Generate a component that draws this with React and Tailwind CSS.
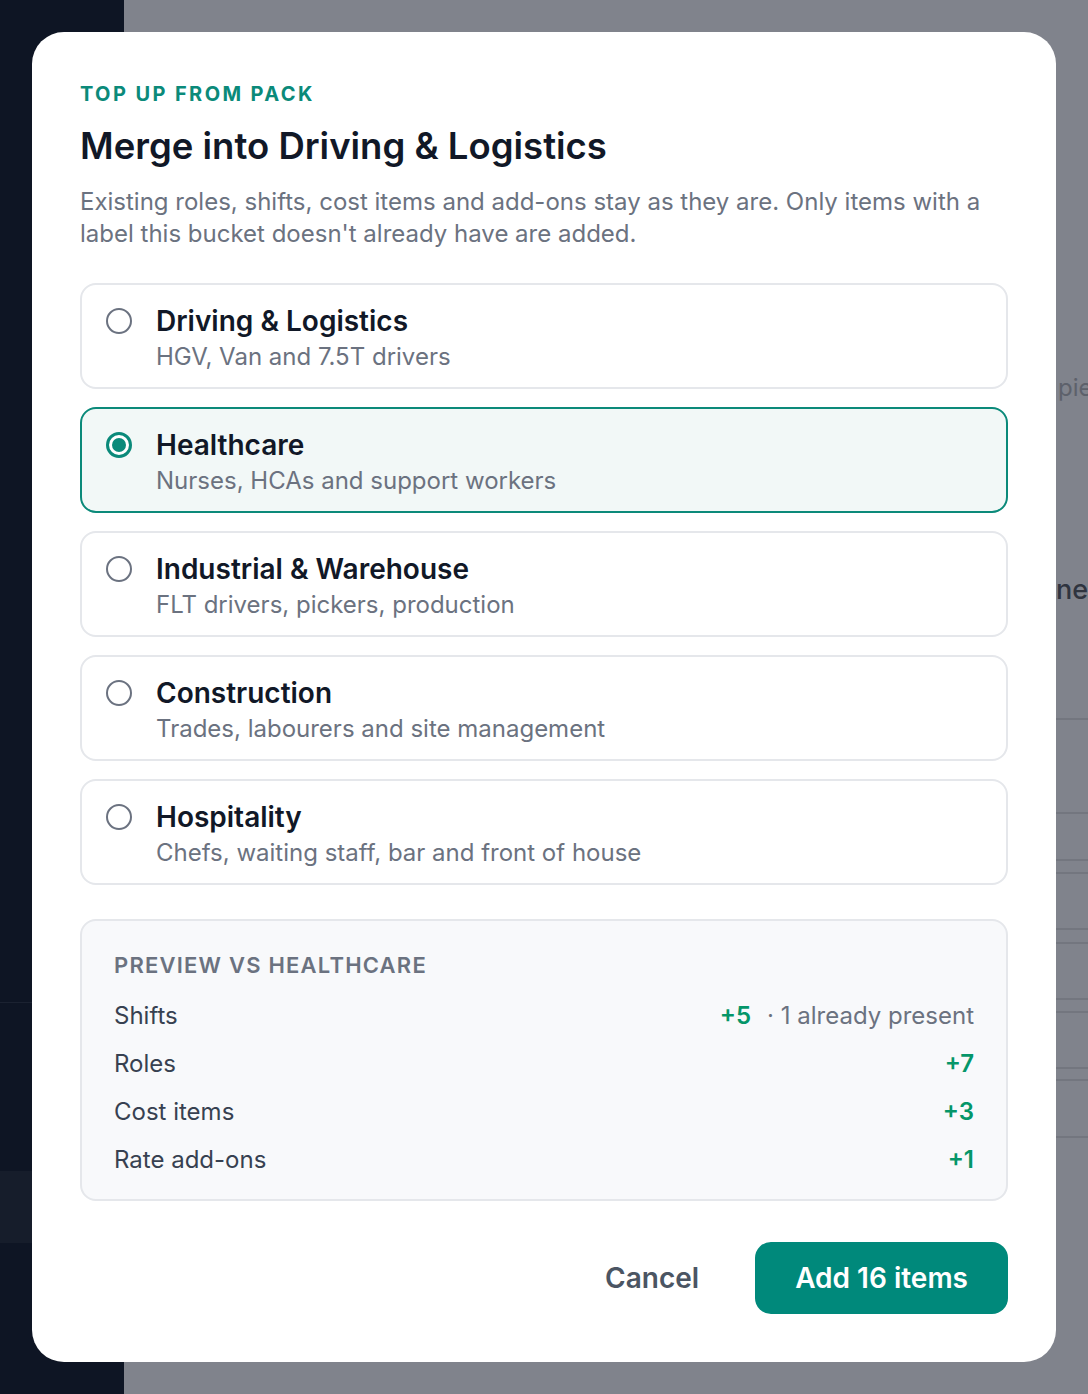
import { useState } from 'react'

const packs = [
  { id: 'driving', name: 'Driving & Logistics', blurb: 'HGV, Van and 7.5T drivers' },
  { id: 'healthcare', name: 'Healthcare', blurb: 'Nurses, HCAs and support workers' },
  { id: 'industrial', name: 'Industrial & Warehouse', blurb: 'FLT drivers, pickers, production' },
  { id: 'construction', name: 'Construction', blurb: 'Trades, labourers and site management' },
  { id: 'hospitality', name: 'Hospitality', blurb: 'Chefs, waiting staff, bar and front of house' },
]

const preview = [
  { label: 'Shifts', added: 5, present: 1 },
  { label: 'Roles', added: 7 },
  { label: 'Cost items', added: 3 },
  { label: 'Rate add-ons', added: 1 },
]

function Radio({ checked }) {
  if (checked) {
    return (
      <span className="w-[26px] h-[26px] shrink-0 rounded-full border-[3px] border-[#0b8a7a] bg-white flex items-center justify-center">
        <span className="w-[14px] h-[14px] rounded-full bg-[#0b8a7a]" />
      </span>
    )
  }
  return <span className="w-[26px] h-[26px] shrink-0 rounded-full border-2 border-[#6b7280] bg-white" />
}

function Backdrop() {
  // the page behind the dimmed overlay
  return (
    <div className="absolute inset-0 flex">
      <aside className="w-[124px] shrink-0 bg-[#0e1524] flex flex-col">
        <div className="h-[1003px] border-b border-[#1b2231]" />
        <div className="h-[168px]" />
        <div className="h-[72px] bg-[#161d2b]" />
      </aside>
      <div className="flex-1 bg-[#80838c] flex flex-col pl-[932px]">
        <div className="h-[372px] shrink-0" />
        <p className="pl-[2px] text-[24px] leading-[32px] text-[#5d616b] whitespace-nowrap">pieces</p>
        <div className="h-[166px] shrink-0" />
        <p className="text-[27px] leading-[40px] font-medium text-[#2f343f] whitespace-nowrap">new</p>
        <div className="h-[110px] shrink-0 border-b-2 border-[#73767f]" />
        <div className="h-[94px] shrink-0 border-b-2 border-[#73767f]" />
        <div className="h-[47px] shrink-0 border-b-2 border-[#73767f]" />
        <div className="h-[13px] shrink-0 border-b-2 border-[#73767f]" />
        <div className="h-[56px] shrink-0 border-b-2 border-[#73767f]" />
        <div className="h-[14px] shrink-0 border-b-2 border-[#73767f]" />
        <div className="h-[56px] shrink-0 border-b-2 border-[#73767f]" />
        <div className="h-[13px] shrink-0 border-b-2 border-[#73767f]" />
        <div className="h-[56px] shrink-0 border-b-2 border-[#73767f]" />
        <div className="h-[12px] shrink-0 border-b-2 border-[#73767f]" />
        <div className="h-[57px] shrink-0 border-b-2 border-[#73767f]" />
      </div>
    </div>
  )
}

export default function App() {
  const [selected, setSelected] = useState('healthcare')
  const total = preview.reduce((sum, row) => sum + row.added, 0)
  const current = packs.find((p) => p.id === selected)

  return (
    <div className="relative w-full h-[1394px] overflow-hidden font-['Inter',sans-serif]">
      <Backdrop />

      <div className="absolute left-[32px] top-[32px] w-[1024px] bg-white rounded-[32px] px-[48px] pt-[48px] pb-[48px]">
        <p className="text-[20px] leading-[28px] font-bold tracking-[0.12em] text-[#0b8a7a]">TOP UP FROM PACK</p>
        <h2 className="mt-4 text-[36.5px] leading-[44px] font-semibold text-[#111827]">
          Merge into Driving &amp; Logistics
        </h2>
        <p className="mt-[18px] text-[24px] leading-[32px] text-[#6b7280]">
          Existing roles, shifts, cost items and add-ons stay as they are. Only items with a label this bucket doesn't
          already have are added.
        </p>

        <div className="mt-[33px] flex flex-col gap-[18px]">
          {packs.map((pack) => {
            const isOn = pack.id === selected
            return (
              <button
                key={pack.id}
                onClick={() => setSelected(pack.id)}
                className={`w-full text-left rounded-[16px] border-2 px-[24px] pt-[18px] pb-[14px] flex gap-[24px] ${
                  isOn ? 'border-[#0b8a7a] bg-[#f2f8f7]' : 'border-[#e5e7eb] bg-white'
                }`}
              >
                <span className="h-[36px] flex items-center">
                  <Radio checked={isOn} />
                </span>
                <span className="flex flex-col">
                  <span className="text-[28px] leading-[36px] font-semibold text-[#111827]">{pack.name}</span>
                  <span className="mt-[2px] text-[24px] leading-[32px] text-[#6b7280]">{pack.blurb}</span>
                </span>
              </button>
            )
          })}
        </div>

        <div className="mt-[34px] rounded-[16px] border-2 border-[#e5e7eb] bg-[#f8f9fb] px-[32px] pt-[30px] pb-[15px]">
          <p className="text-[22px] leading-[28px] font-semibold tracking-[0.055em] text-[#6b7280]">
            PREVIEW VS {current.name.toUpperCase()}
          </p>
          <div className="mt-[13px] flex flex-col">
            {preview.map((row) => (
              <div key={row.label} className="h-[48px] flex items-center justify-between text-[24px]">
                <span className="text-[#374151]">{row.label}</span>
                <span className="flex items-center gap-[16px]">
                  <span className="font-semibold text-[#059669]">+{row.added}</span>
                  {row.present ? <span className="text-[#6b7280]">· {row.present} already present</span> : null}
                </span>
              </div>
            ))}
          </div>
        </div>

        <div className="mt-[41px] flex justify-end items-center gap-[16px]">
          <button className="h-[72px] px-[40px] text-[28px] font-semibold text-[#4b5563] rounded-[16px]">Cancel</button>
          <button className="h-[72px] px-[40px] text-[28px] font-semibold text-white bg-[#00897b] rounded-[16px]">
            Add {total} items
          </button>
        </div>
      </div>
    </div>
  )
}
